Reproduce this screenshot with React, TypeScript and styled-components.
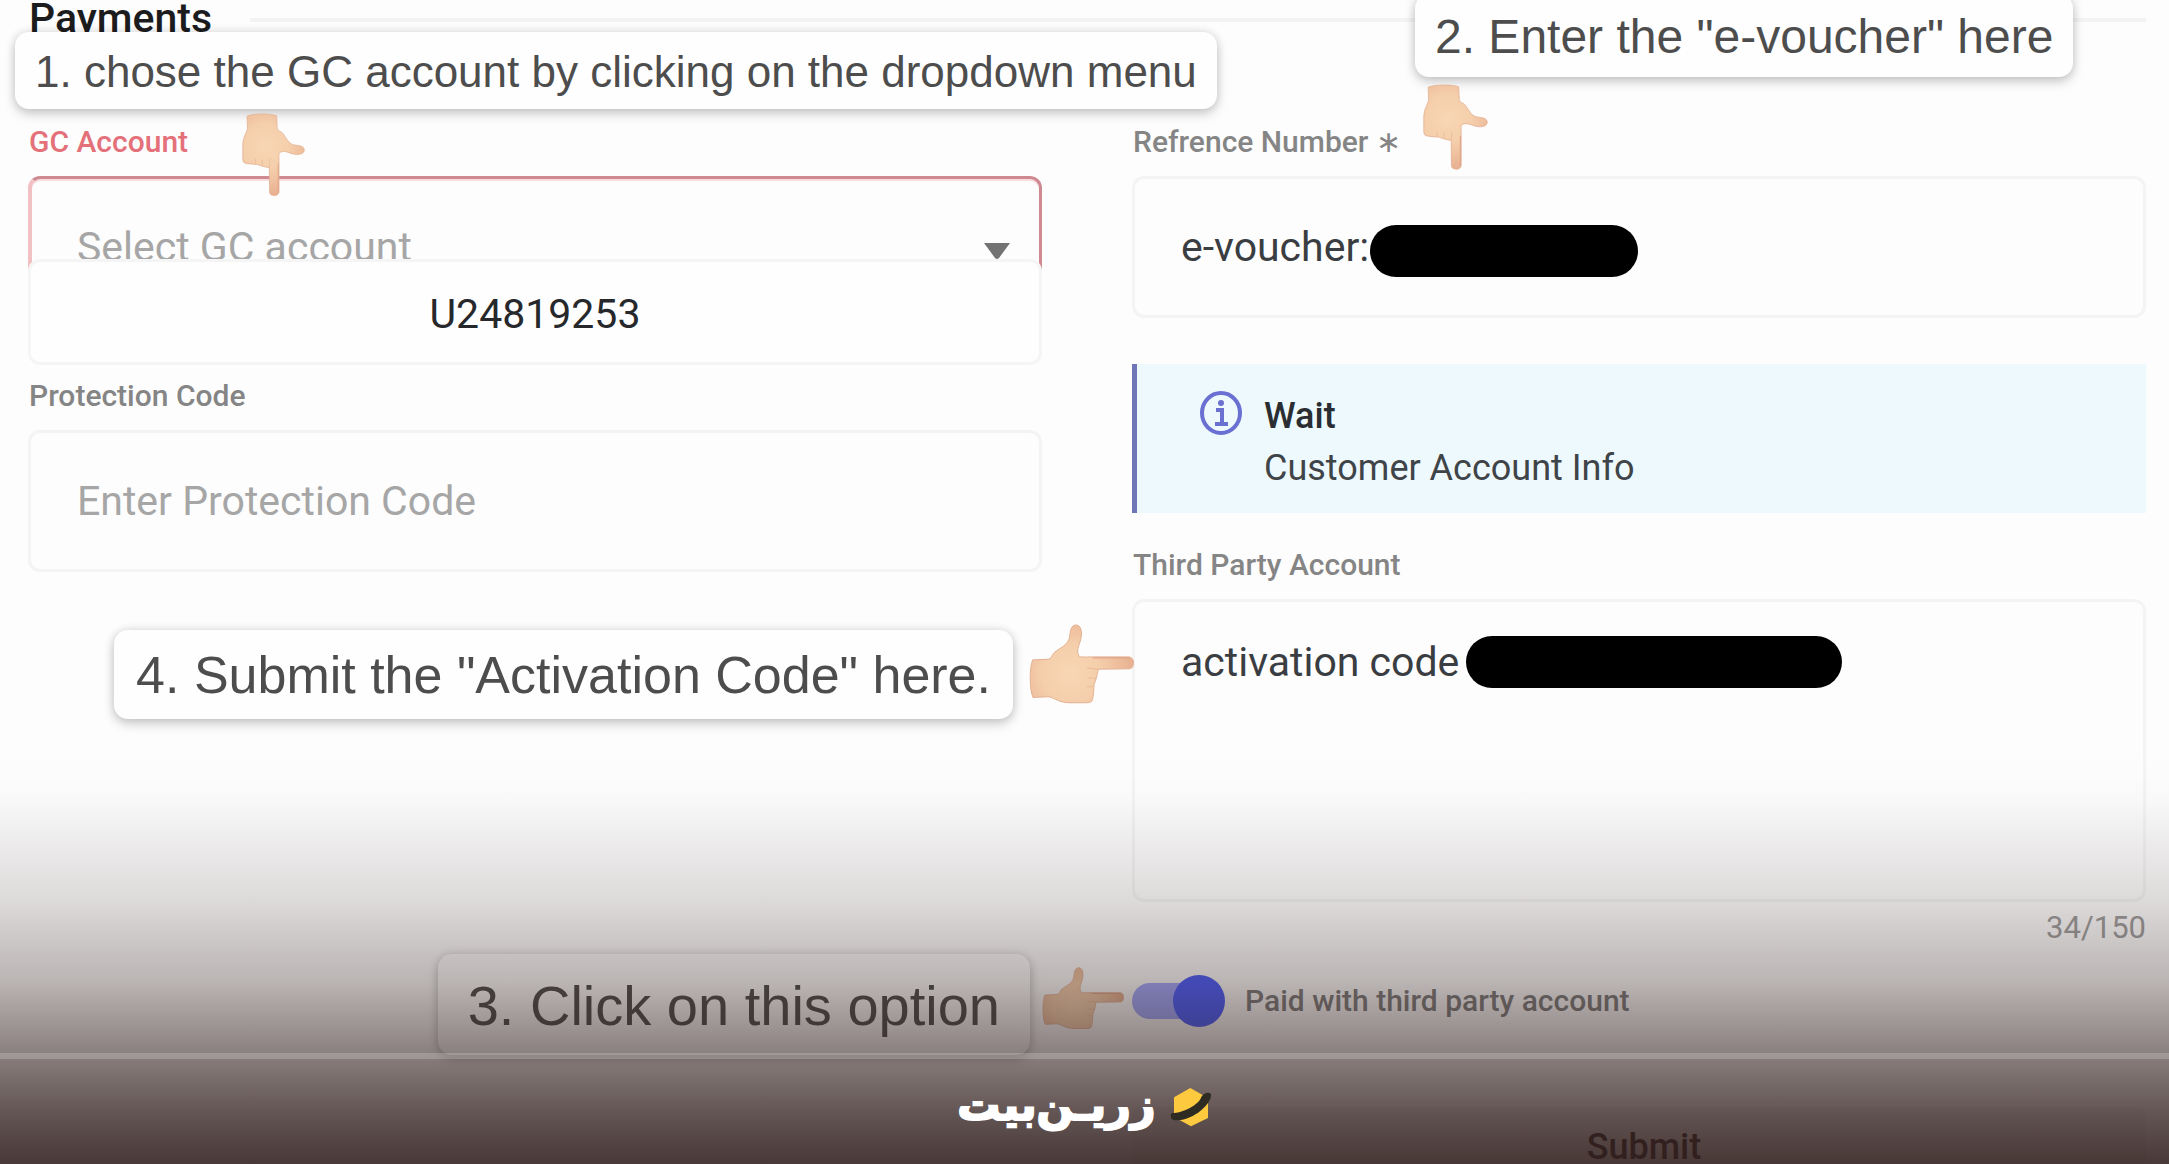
import React, { useState } from "react";
import styled, { createGlobalStyle, css } from "styled-components";

const GlobalStyle = createGlobalStyle`
  *, *::before, *::after { box-sizing: border-box; }
  body {
    margin: 0;
    background: #fdfdfd;
    font-family: Roboto, "Noto Sans", sans-serif;
  }
`;

const Page = styled.div`
  position: relative;
  height: 100vh;
  overflow: hidden;
  background: #fdfdfd;
`;

const SectionHeader = styled.header`
  display: flex;
  align-items: flex-start;
  gap: 38px;
  height: 122px;
  padding: 0 23px 0 29px;
`;

const Title = styled.h2`
  margin: 0;
  font-size: 41px;
  line-height: 36px;
  font-weight: 500;
  color: #1c1c1e;
`;

const Rule = styled.hr`
  flex: 1;
  height: 4px;
  margin: 18px 0 0;
  border: 0;
  background: #f3f3f3;
`;

const Form = styled.form`
  display: grid;
  grid-template-columns: 1fr 1fr;
  column-gap: 90px;
  padding: 0 23px 0 28px;
`;

const Column = styled.div`
  position: relative;
  display: flex;
  flex-direction: column;
`;

const Field = styled.div<{ $before?: number }>`
  display: flex;
  flex-direction: column;
  gap: 14px;
  margin-top: ${(p) => p.$before ?? 0}px;
`;

const Label = styled.label<{ $error?: boolean }>`
  padding-left: 1px;
  font-size: 30px;
  line-height: 40px;
  font-weight: 500;
  color: ${(p) => (p.$error ? "#e4717a" : "#858585")};
`;

const Control = styled.div`
  position: relative;
`;

const box = css`
  display: block;
  width: 100%;
  margin: 0;
  border: 3px solid #f4f4f4;
  border-radius: 12px;
  background: transparent;
  color: #3a3d42;
  font-family: inherit;
  font-size: 41px;
  outline: 0;
`;

const TextInput = styled.input`
  ${box}
  height: 142px;
  padding: 0 46px;
  &::placeholder { color: #a6a6a6; opacity: 1; }
`;

const TextArea = styled.textarea`
  ${box}
  height: 303px;
  padding: 36px 46px;
  line-height: 48px;
  resize: none;
`;

const SelectBox = styled.select`
  ${box}
  appearance: none;
  height: 142px;
  padding: 0 45px;
  border-color: #cf8a91 #cf8a91 #cf8a91 #f2bfc3;
  border-left-width: 4px;
  box-shadow: inset 0 2px 0 #f8dcde;
  color: #a6a6a6;
`;

const Arrow = styled.svg`
  position: absolute;
  top: 67px;
  right: 32px;
  width: 26px;
  height: 17px;
`;

const OptionList = styled.ul`
  position: absolute;
  top: 83px;
  left: 0;
  right: 0;
  margin: 0;
  padding: 0;
  list-style: none;
  border: 3px solid #f5f5f5;
  border-radius: 12px;
  background: #fefefe;
`;

const OptionItem = styled.button`
  display: block;
  width: 100%;
  height: 100px;
  padding: 4px 0 0;
  border: 0;
  background: transparent;
  font-family: inherit;
  font-size: 41px;
  color: #26282b;
`;

const Redaction = styled.span<{ $left: number; $top: number; $width: number }>`
  position: absolute;
  left: ${(p) => p.$left}px;
  top: ${(p) => p.$top}px;
  width: ${(p) => p.$width}px;
  height: 52px;
  border-radius: 26px;
  background: #000;
`;

const Notice = styled.aside`
  display: flex;
  gap: 21px;
  height: 149px;
  margin-top: 46px;
  padding: 26px 62px 0;
  border-left: 5px solid #6f76b8;
  background: #edf9fd;
`;

const NoticeIcon = styled.svg`
  width: 44px;
  height: 46px;
`;

const NoticeText = styled.p<{ $strong?: boolean }>`
  margin: 0;
  font-size: 36px;
  line-height: 52px;
  font-weight: ${(p) => (p.$strong ? 500 : 400)};
  color: ${(p) => (p.$strong ? "#2a2d31" : "#3f4448")};
`;

const Counter = styled.output`
  margin-top: 6px;
  font-size: 31px;
  line-height: 40px;
  text-align: right;
  color: #9c9c9c;
`;

const SwitchRow = styled.label`
  display: flex;
  align-items: center;
  gap: 20px;
  margin-top: 27px;
  font-size: 30px;
  line-height: 40px;
  font-weight: 500;
  color: #7d7d7d;
`;

const Switch = styled.input`
  appearance: none;
  position: relative;
  width: 93px;
  height: 52px;
  margin: 0;
  &::before {
    content: "";
    position: absolute;
    left: 0;
    top: 8px;
    width: 86px;
    height: 36px;
    border-radius: 18px;
    background: #a3aaff;
  }
  &::after {
    content: "";
    position: absolute;
    left: 0;
    top: 0;
    width: 52px;
    height: 52px;
    border-radius: 50%;
    background: #a8a8a8;
  }
  &:checked::after {
    left: 41px;
    background: #4a5eff;
  }
`;

const Submit = styled.button`
  height: 80px;
  margin-top: 80px;
  padding: 0 0 0 10px;
  border: 0;
  border-radius: 8px;
  background: #f4f4f4;
  font-family: inherit;
  font-size: 36px;
  font-weight: 500;
  color: #2e2020;
`;

/* Instruction bubbles and pointing hands lie on top of the form. */
const Callout = styled.div<{
  $size: number;
  $height: number;
  $top: number;
  $left?: number;
  $before?: number;
  $pad?: number;
}>`
  position: absolute;
  z-index: 2;
  top: ${(p) => p.$top}px;
  ${(p) => (p.$before !== undefined ? `right: calc(100% + ${p.$before}px);` : `left: ${p.$left}px;`)}
  height: ${(p) => p.$height}px;
  padding: 2px ${(p) => p.$pad ?? 20}px 0;
  border-radius: 14px;
  background: #fefefe;
  box-shadow: 0 5px 12px rgba(0, 0, 0, 0.18), 0 0 10px rgba(0, 0, 0, 0.12);
  font-family: "Liberation Sans", Arial, sans-serif;
  font-size: ${(p) => p.$size}px;
  line-height: ${(p) => p.$height - 2}px;
  white-space: nowrap;
  color: #4d4d4d;
`;

const HandSvg = styled.svg<{ $left: number; $top: number; $width: number }>`
  position: absolute;
  z-index: 3;
  left: ${(p) => p.$left}px;
  top: ${(p) => p.$top}px;
  width: ${(p) => p.$width}px;
  height: auto;
`;

const Shade = styled.div`
  position: absolute;
  z-index: 4;
  left: 0;
  right: 0;
  bottom: 0;
  height: 424px;
  pointer-events: none;
  background: linear-gradient(
    to bottom,
    rgba(50, 32, 30, 0) 0%,
    rgba(50, 32, 30, 0.005) 8%,
    rgba(50, 32, 30, 0.02) 14%,
    rgba(50, 32, 30, 0.055) 20%,
    rgba(50, 32, 30, 0.09) 26%,
    rgba(50, 32, 30, 0.13) 33%,
    rgba(50, 32, 30, 0.16) 38%,
    rgba(50, 32, 30, 0.23) 46%,
    rgba(50, 32, 30, 0.33) 57%,
    rgba(50, 32, 30, 0.57) 74%,
    rgba(50, 32, 30, 0.75) 87%,
    rgba(50, 32, 30, 0.89) 100%
  );
`;

const BrandBar = styled.footer`
  position: absolute;
  z-index: 5;
  left: 0;
  right: 0;
  bottom: 0;
  display: flex;
  align-items: center;
  justify-content: center;
  gap: 14px;
  height: 111px;
  padding-bottom: 10px;
  border-top: 6px solid rgba(255, 255, 255, 0.2);
`;

const BrandName = styled.span`
  margin-top: -4px;
  font-family: "DejaVu Sans", sans-serif;
  font-size: 43px;
  line-height: 60px;
  font-weight: 700;
  color: #fff;
  -webkit-text-stroke: 2px #fff;
  stroke-linejoin: round;
`;

const BrandMark = styled.svg`
  width: 42px;
  height: 40px;
`;

type HandProps = { direction: "right" | "down"; left: number; top: number; width: number };

function Hand({ direction, left, top, width }: HandProps) {
  const down = direction === "down";
  const id = `skin-${left}-${direction}`;
  return (
    <HandSvg
      viewBox={down ? "0 0 240 316" : "88 76 316 240"}
      $left={left}
      $top={top}
      $width={width}
      aria-hidden="true"
    >
      <defs>
        <radialGradient id={id} gradientUnits="userSpaceOnUse" cx="215" cy="225" r="190">
          <stop offset="0" stopColor="#f8d6b4" />
          <stop offset="0.45" stopColor="#f5cfac" />
          <stop offset="1" stopColor="#e8b090" />
        </radialGradient>
      </defs>
      <g transform={down ? "translate(316 -88) rotate(90)" : undefined}>
        <path
          d="M99 184 L146 182 C158 180 156 170 164 162 C180 148 206 140 210 116 C212 98 214 80 228 79 C244 78 248 98 245 116 C243 134 228 152 238 172 C242 177 260 175 276 175 L388 175 C402 176 404 190 402 196 C401 208 396 211 386 211 L296 212 C296 222 292 230 291 238 C290 246 285 250 284 258 C283 276 282 292 279 304 C276 314 266 313 256 313 L206 313 C180 312 166 300 148 295 L100 297 C90 276 88 210 99 184 Z"
          fill={`url(#${id})`}
          stroke="#e3b193"
          strokeWidth="3"
        />
        <path d="M262 209 L296 212 M266 238 L290 239 M262 265 L283 264" stroke="#ecc09e" strokeWidth="4" fill="none" />
        <path d="M280 178 L392 178" stroke="#e0a68a" strokeWidth="4" />
      </g>
    </HandSvg>
  );
}

export default function App() {
  const [account, setAccount] = useState("");
  const [reference, setReference] = useState("e-voucher:");
  const [thirdParty, setThirdParty] = useState("activation code");
  const [paid, setPaid] = useState(true);

  return (
    <Page>
      <GlobalStyle />
      <SectionHeader>
        <Title>Payments</Title>
        <Rule />
      </SectionHeader>

      <Form onSubmit={(e) => e.preventDefault()}>
        <Column>
          <Field>
            <Label htmlFor="gc" $error>GC Account</Label>
            <Control>
              <SelectBox id="gc" value={account} onChange={(e) => setAccount(e.target.value)}>
                <option value="">Select GC account</option>
                <option value="U24819253">U24819253</option>
              </SelectBox>
              <Arrow viewBox="0 0 26 17" aria-hidden="true">
                <path d="M0 0H26L15 15Q13 17 11 15Z" fill="#737373" />
              </Arrow>
              <OptionList>
                <li>
                  <OptionItem type="button" onClick={() => setAccount("U24819253")}>U24819253</OptionItem>
                </li>
              </OptionList>
            </Control>
          </Field>
          <Field $before={58}>
            <Label htmlFor="protection">Protection Code</Label>
            <TextInput id="protection" placeholder="Enter Protection Code" />
          </Field>
          <Callout $size={44} $height={77} $top={-90} $left={-13}>
            1. chose the GC account by clicking on the dropdown menu
          </Callout>
          <Hand direction="down" left={214} top={-9} width={63} />
        </Column>

        <Column>
          <Field>
            <Label htmlFor="reference">Refrence Number ∗</Label>
            <Control>
              <TextInput id="reference" value={reference} onChange={(e) => setReference(e.target.value)} />
              <Redaction $left={238} $top={49} $width={268} />
            </Control>
          </Field>
          <Notice>
            <NoticeIcon viewBox="0 0 44 46" fill="none" stroke="#6a70d2" aria-hidden="true">
              <ellipse cx="22" cy="23" rx="19" ry="20" strokeWidth="4" />
              <path d="M17 20H23V34M16 34H29" strokeWidth="4" />
              <circle cx="22" cy="13" r="3" fill="#6a70d2" stroke="none" />
            </NoticeIcon>
            <div>
              <NoticeText $strong>Wait</NoticeText>
              <NoticeText>Customer Account Info</NoticeText>
            </div>
          </Notice>
          <Field $before={32}>
            <Label htmlFor="third">Third Party Account</Label>
            <Control>
              <TextArea id="third" value={thirdParty} onChange={(e) => setThirdParty(e.target.value)} />
              <Redaction $left={334} $top={37} $width={376} />
            </Control>
          </Field>
          <Counter htmlFor="third">34/150</Counter>
          <SwitchRow>
            <Switch type="checkbox" role="switch" checked={paid} onChange={(e) => setPaid(e.target.checked)} />
            Paid with third party account
          </SwitchRow>
          <Submit type="submit">Submit</Submit>

          <Callout $size={48} $height={83} $top={-128} $left={283}>
            2. Enter the "e-voucher" here
          </Callout>
          <Hand direction="down" left={291} top={-38} width={65} />
          <Callout $size={52} $height={89} $top={508} $before={119} $pad={22}>
            4. Submit the "Activation Code" here.
          </Callout>
          <Hand direction="right" left={-103} top={502} width={105} />
          <Callout $size={56} $height={101} $top={832} $before={102} $pad={30}>
            3. Click on this option
          </Callout>
          <Hand direction="right" left={-90} top={845} width={82} />
        </Column>
      </Form>

      <Shade />
      <BrandBar>
        <BrandName lang="fa" dir="rtl">زریـن‌بیت</BrandName>
        <BrandMark viewBox="714 88 126 120" aria-hidden="true">
          <path d="M775 91L828 121V181L777 206L748 190L726 178V119Z" fill="#fcc93f" />
          <path
            d="M836 108C845 130 792 186 736 188C722 189 714 184 717 168C720 166 723 166 727 166C755 164 800 142 808 118C813 107 830 101 836 108Z"
            fill="#2d2b22"
          />
        </BrandMark>
      </BrandBar>
    </Page>
  );
}
